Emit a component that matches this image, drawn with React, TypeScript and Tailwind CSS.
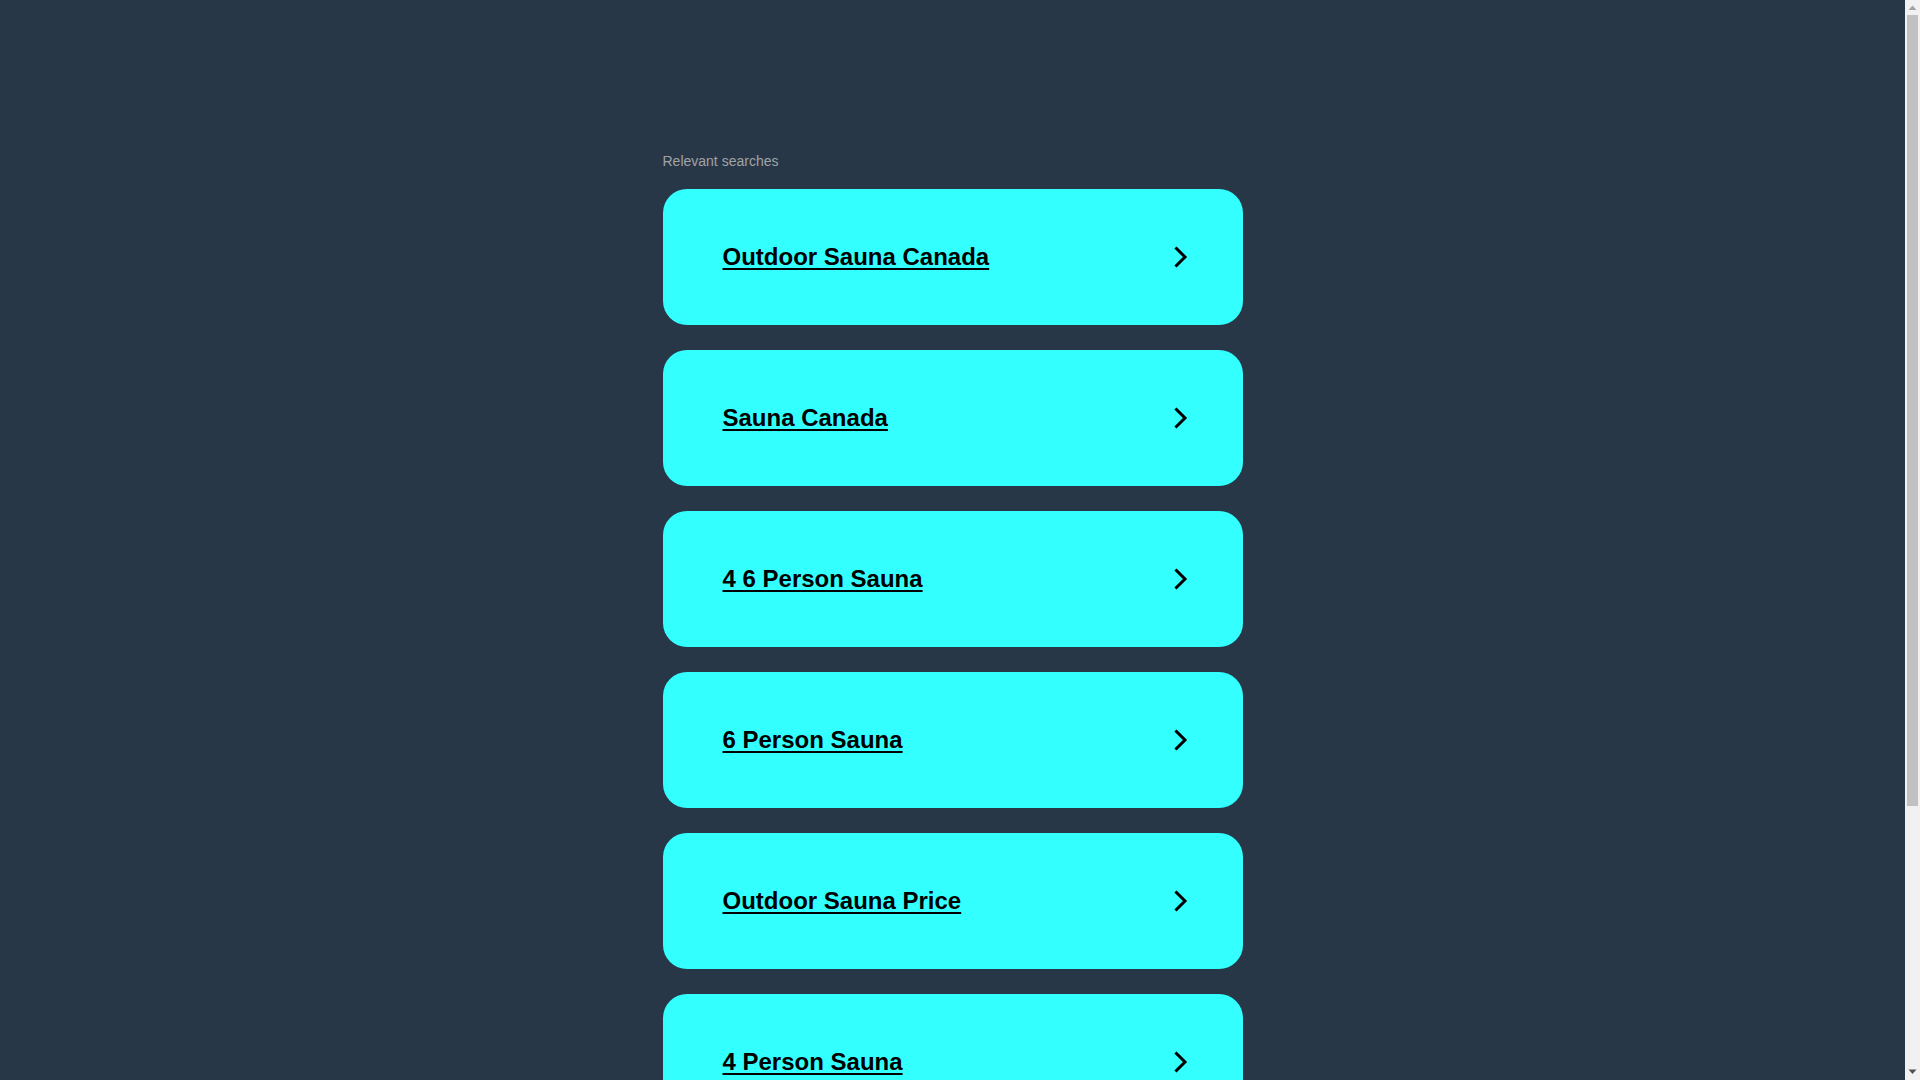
import { ReactNode } from 'react'

const SEARCHES = [
  'Outdoor Sauna Canada',
  'Sauna Canada',
  '4 6 Person Sauna',
  '6 Person Sauna',
  'Outdoor Sauna Price',
  '4 Person Sauna',
]

function Chevron() {
  return (
    <svg width="14" height="22" viewBox="0 0 14 22" fill="none" aria-hidden="true">
      <path d="M2.5 2.5 L11 11 L2.5 19.5" stroke="#000" strokeWidth="3" strokeLinecap="square" />
    </svg>
  )
}

function SearchCard({ children }: { children: ReactNode }) {
  return (
    <a
      href="#"
      className="flex h-[136px] items-center justify-between rounded-3xl bg-[#33ffff] pl-[60px] pr-[55px] text-black"
    >
      <span className="text-[24px] font-bold underline decoration-2 underline-offset-[3px]">{children}</span>
      <Chevron />
    </a>
  )
}

// classic window scrollbar, thumb at the top of the track
function Scrollbar() {
  return (
    <div className="sticky top-0 flex h-screen w-[15px] shrink-0 flex-col items-center bg-[#f1f1f1]">
      <svg width="15" height="15" viewBox="0 0 15 15" className="shrink-0" aria-hidden="true">
        <path d="M3.5 10 L7.5 5.5 L11.5 10 Z" fill="#a3a3a3" />
      </svg>
      <div className="h-[791px] w-[11px] bg-[#c1c1c1]" />
      <div className="flex-1" />
      <svg width="15" height="15" viewBox="0 0 15 15" className="shrink-0" aria-hidden="true">
        <path d="M3.5 4.5 L7.5 9 L11.5 4.5 Z" fill="#505050" />
      </svg>
    </div>
  )
}

export default function App() {
  return (
    <div
      className="flex h-screen overflow-hidden bg-[#283747]"
      style={{ fontFamily: '"Liberation Sans", Arial, sans-serif' }}
    >
      <main className="flex-1 pb-[304px] pt-[151px]">
        <div className="mx-auto w-[580px]">
          <div className="mb-[18px] text-[14px] leading-5 text-[#a0a3a6]">Relevant searches</div>
          <div className="flex flex-col gap-[25px]">
            {SEARCHES.map(s => (
              <SearchCard key={s}>{s}</SearchCard>
            ))}
          </div>
        </div>
      </main>
      <Scrollbar />
    </div>
  )
}
